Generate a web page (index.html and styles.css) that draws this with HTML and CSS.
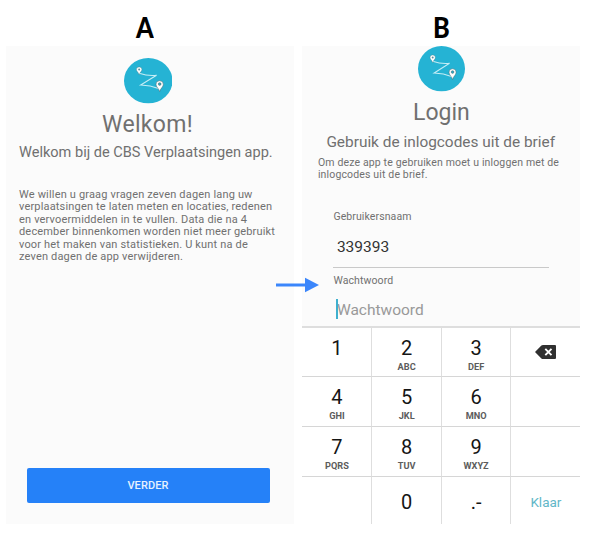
FILE: index.html
```html
<!DOCTYPE html>
<html lang="nl">
<head>
<meta charset="utf-8">
<title>CBS Verplaatsingen</title>
<link rel="stylesheet" href="styles.css">
</head>
<body>
<svg class="defs" aria-hidden="true">
  <symbol id="logo" viewBox="0 0 48 46" preserveAspectRatio="none">
    <ellipse cx="24" cy="23" rx="24" ry="23" fill="#25b3d4"/>
    <path d="M15 15.5Q24 18.5 32.2 17.5L16.5 27.3Q26 27.5 35 31" fill="none" stroke="#c5edf5" stroke-width="1.1"/>
    <path d="M15 17C14.3 14.3 12.3 13.7 12.3 11.7a2.7 2.7 0 0 1 5.4 0C17.7 13.7 15.7 14.3 15 17Z" fill="#fff" stroke="#527d88" stroke-width=".4"/>
    <circle cx="15" cy="11.6" r="1" fill="#5b8e9b"/>
    <path d="M35.3 34C34.6 30.7 31.7 29.4 31.7 26.6a3.6 3.6 0 0 1 7.2 0C38.9 29.4 36 30.7 35.3 34Z" fill="#fff" stroke="#4a6870" stroke-width=".5"/>
    <circle cx="35.3" cy="26.3" r="1.4" fill="#2ba9c5" stroke="#4a6870" stroke-width=".5"/>
  </symbol>
</svg>
<main class="figure">
  <section class="column column-a">
    <h2 class="label"><span>A</span></h2>
    <div class="screen welcome">
      <svg class="logo"><use href="#logo"/></svg>
      <h1 class="title"><span>Welkom!</span></h1>
      <p class="subtitle">Welkom bij de CBS Verplaatsingen app.</p>
      <p class="copy">We willen u graag vragen zeven dagen lang uw<br>verplaatsingen te laten meten en locaties, redenen<br>en vervoermiddelen in te vullen. Data die na 4<br>december binnenkomen worden niet meer gebruikt<br>voor het maken van statistieken. U kunt na de<br>zeven dagen de app verwijderen.</p>
      <button class="next">VERDER</button>
    </div>
  </section>
  <section class="column column-b">
    <h2 class="label"><span>B</span></h2>
    <div class="screen login">
      <svg class="logo"><use href="#logo"/></svg>
      <h1 class="title">Login</h1>
      <p class="subtitle">Gebruik de inlogcodes uit de brief</p>
      <p class="copy">Om deze app te gebruiken moet u inloggen met de<br>inlogcodes uit de brief.</p>
      <div class="field user">
        <div class="name">Gebruikersnaam</div>
        <div class="value">339393</div>
      </div>
      <div class="field password">
        <div class="name">Wachtwoord</div>
        <div class="value"><i class="caret"></i>Wachtwoord</div>
      </div>
      <div class="keypad">
        <div class="key"><b>1</b></div>
        <div class="key"><b>2</b><small>ABC</small></div>
        <div class="key"><b>3</b><small>DEF</small></div>
        <div class="key erase"><svg viewBox="0 0 21 14"><path d="M0 7L6.4.6Q7 0 8 0H20Q21 0 21 1V13Q21 14 20 14H8Q7 14 6.4 13.4Z" fill="#303030"/><path d="M10.3 3.8L16.5 10.2M16.5 3.8L10.3 10.2" stroke="#fff" stroke-width="1.9"/></svg></div>
        <div class="key"><b>4</b><small>GHI</small></div>
        <div class="key"><b>5</b><small>JKL</small></div>
        <div class="key"><b>6</b><small>MNO</small></div>
        <div class="key"></div>
        <div class="key"><b>7</b><small>PQRS</small></div>
        <div class="key"><b>8</b><small>TUV</small></div>
        <div class="key"><b>9</b><small>WXYZ</small></div>
        <div class="key"></div>
        <div class="key"></div>
        <div class="key low"><b>0</b></div>
        <div class="key low"><b>.-</b></div>
        <div class="key done">Klaar</div>
      </div>
    </div>
  </section>
  <svg class="arrow" viewBox="0 0 44 16"><path d="M0 8H30" stroke="#3b86fb" stroke-width="3"/><path d="M29 .8L43 8L29 15.2Z" fill="#3b86fb"/></svg>
</main>
</body>
</html>
```
FILE: styles.css
```css
* { box-sizing: border-box; margin: 0; padding: 0; }
body { background: #fff; font-family: Roboto, "Liberation Sans", sans-serif; color: #707070; }
.defs { position: absolute; width: 0; height: 0; }
.figure { position: relative; width: 602px; height: 534px; padding-left: 6px; display: flex; gap: 8.4px; }
.column-a { width: 288px; }
.column-b { width: 278px; }
.label { height: 46px; padding-top: 10px; text-align: center; font: 900 28px/34px Lato, sans-serif; color: #000; }
.label span { display: inline-block; transform: scaleX(.9); }
.column-a .label { padding-right: 10px; }
.screen { height: 478px; background: #fbfbfb; display: flex; flex-direction: column; overflow: hidden; white-space: nowrap; }
.logo { display: block; align-self: center; flex: none; }
.title { font-weight: 400; font-size: 23px; line-height: 30px; text-align: center; flex: none; }

.welcome { padding: 12px 13px 0; }
.welcome .logo { width: 48.5px; height: 45.5px; margin-right: 4px; }
.welcome .title { margin-top: 6.5px; margin-right: 5px; letter-spacing: .3px; }
.welcome .subtitle { margin-top: 3px; font-size: 14.55px; line-height: 20px; }
.welcome .copy { margin-top: 26px; font-size: 11px; letter-spacing: .17px; line-height: 12.4px; }
.next { margin: auto 11.5px 21px 7.5px; width: 243px; height: 35.5px; flex: none; border: 0; border-radius: 2px; background: #2581f8; color: #e6f1ff; font: 500 11px/36px Roboto, sans-serif; letter-spacing: .1px; }

.login .logo { width: 47px; height: 45.5px; }
.login .title { margin-top: 6.5px; }
.login .subtitle { margin-top: 4px; font-size: 15.4px; line-height: 20px; padding-left: 24px; }
.login .copy { margin-top: 5px; font-size: 10.5px; letter-spacing: .15px; line-height: 12px; padding-left: 15.5px; }
.field { margin-left: 31px; width: 216px; }
.field .name { font-size: 10.5px; line-height: 14px; letter-spacing: .1px; }
.field .value { font-size: 15.5px; line-height: 20px; padding-left: 3.5px; }
.user { margin-top: 28.5px; height: 58.5px; border-bottom: 1.5px solid #c9c9c9; }
.user .value { margin-top: 13px; color: #333; }
.password { margin-top: 5.5px; height: 52.5px; }
.password .value { position: relative; margin-top: 12px; color: #999; }
.caret { position: absolute; left: 3px; top: -.5px; width: 2px; height: 20px; background: #3fb0ce; }

.keypad { height: 198px; margin-top: auto; flex: none; border-top: 2px solid #dedede; display: grid; grid-template-columns: 70px 69.5px 69.5px 69px; grid-template-rows: 49px 50px 50px 47px; background: #fff; }
.key { border-right: 1.5px solid #dedede; border-bottom: 1px solid #d6d6d6; display: flex; flex-direction: column; align-items: center; padding-top: 8px; }
.key:nth-child(4n) { border-right: 0; }
.key:nth-child(n+13) { border-bottom: 0; }
.key b { font-weight: 400; font-size: 20px; line-height: 24px; color: #151515; }
.key small { font-weight: 700; font-size: 9.2px; line-height: 12px; margin-top: 1px; color: #5c5c5c; }
.key.low { padding-top: 13px; }
.erase { padding-top: 17px; }
.erase svg { width: 21px; height: 14px; }
.done { padding-top: 17px; font-size: 13.5px; line-height: 16px; color: #62b7c8; }
.arrow { position: absolute; left: 276px; top: 277px; width: 44px; height: 16px; }
```
